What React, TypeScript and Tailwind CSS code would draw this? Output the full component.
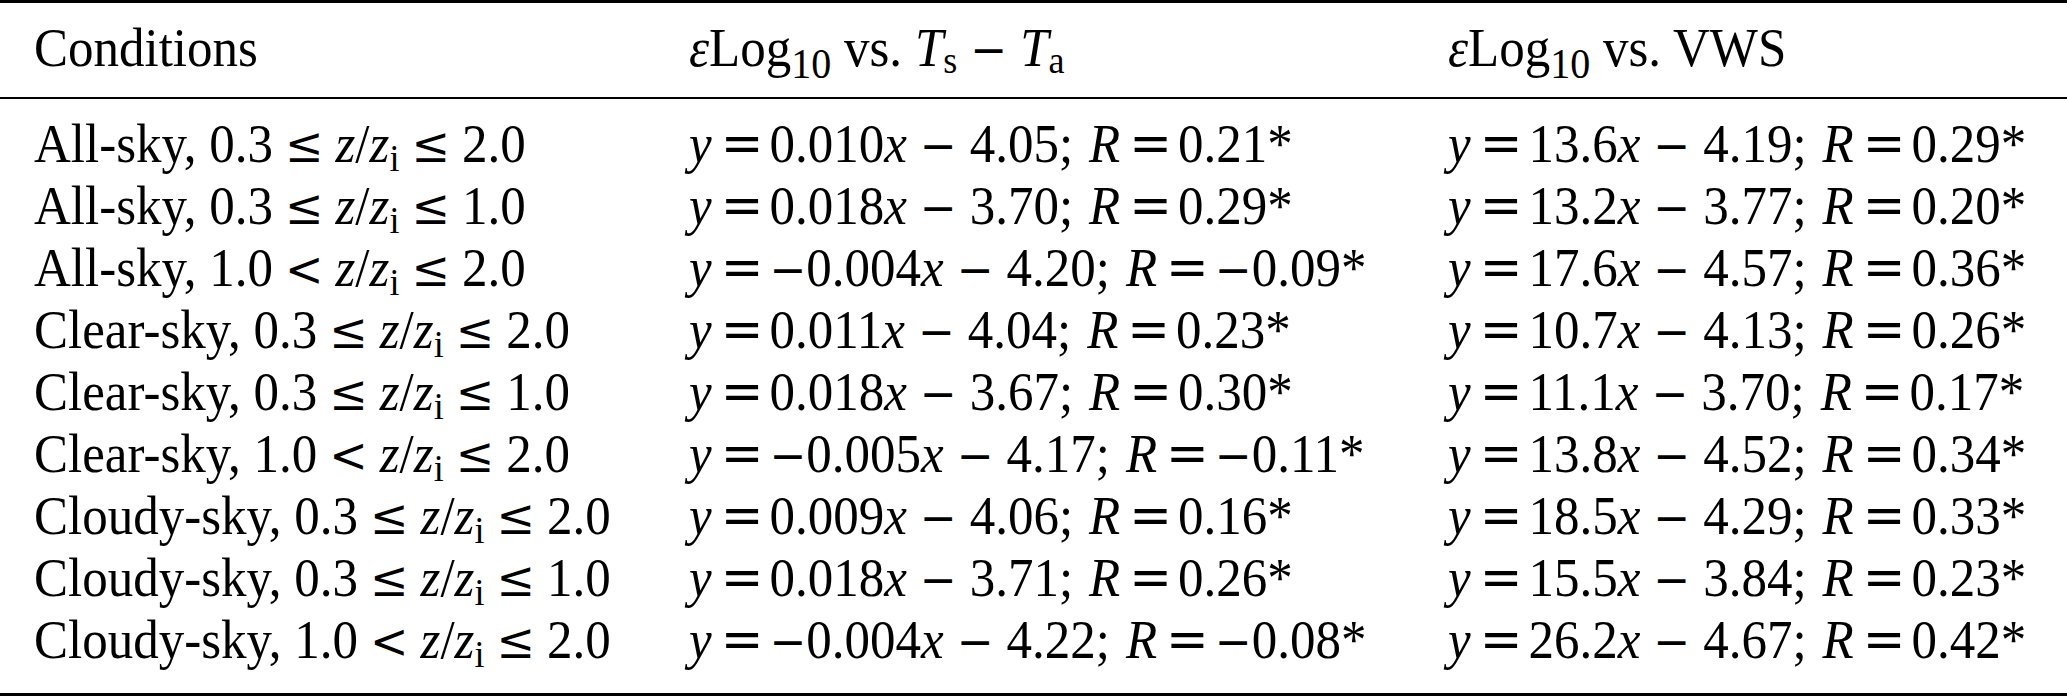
const rows = [
  { sky: "All-sky", lo: "0.3", op: "≤", hi: "2.0", a: ["0.010", "4.05", "0.21"], b: ["13.6", "4.19", "0.29"] },
  { sky: "All-sky", lo: "0.3", op: "≤", hi: "1.0", a: ["0.018", "3.70", "0.29"], b: ["13.2", "3.77", "0.20"] },
  { sky: "All-sky", lo: "1.0", op: "<", hi: "2.0", a: ["-0.004", "4.20", "-0.09"], b: ["17.6", "4.57", "0.36"] },
  { sky: "Clear-sky", lo: "0.3", op: "≤", hi: "2.0", a: ["0.011", "4.04", "0.23"], b: ["10.7", "4.13", "0.26"] },
  { sky: "Clear-sky", lo: "0.3", op: "≤", hi: "1.0", a: ["0.018", "3.67", "0.30"], b: ["11.1", "3.70", "0.17"] },
  { sky: "Clear-sky", lo: "1.0", op: "<", hi: "2.0", a: ["-0.005", "4.17", "-0.11"], b: ["13.8", "4.52", "0.34"] },
  { sky: "Cloudy-sky", lo: "0.3", op: "≤", hi: "2.0", a: ["0.009", "4.06", "0.16"], b: ["18.5", "4.29", "0.33"] },
  { sky: "Cloudy-sky", lo: "0.3", op: "≤", hi: "1.0", a: ["0.018", "3.71", "0.26"], b: ["15.5", "3.84", "0.23"] },
  { sky: "Cloudy-sky", lo: "1.0", op: "<", hi: "2.0", a: ["-0.004", "4.22", "-0.08"], b: ["26.2", "4.67", "0.42"] },
]

// math symbols come out wider in DejaVu, closer to the TeX glyphs
function Eqs() {
  return <span className="ml-[9px] mr-[6px] font-['DejaVu_Serif',serif] text-[51px] leading-none">=</span>
}

function Minus({ binary = false }: { binary?: boolean }) {
  return (
    <span className={`${binary ? "mx-[13px]" : ""} font-['DejaVu_Serif',serif] text-[44px] leading-none`}>−</span>
  )
}

function Num({ v }: { v: string }) {
  return v.startsWith("-") ? (
    <>
      <Minus />
      {v.slice(1)}
    </>
  ) : (
    <>{v}</>
  )
}

function Leq({ op }: { op: string }) {
  return <span className="mx-[12px] font-['DejaVu_Serif',serif] text-[46px] leading-none">{op}</span>
}

function Sub({ children, drop = "top-[8px]" }: { children: React.ReactNode; drop?: string }) {
  return <span className={`relative ${drop} text-[36px] leading-none`}>{children}</span>
}

function Eq({ v }: { v: string[] }) {
  return (
    <>
      <i>y</i>
      <Eqs />
      <Num v={v[0]} />
      <i>x</i>
      <Minus binary />
      {v[1]};<span className="ml-[16px]" />
      <i>R</i>
      <Eqs />
      <Num v={v[2]} />*
    </>
  )
}

function LogHead() {
  return (
    <>
      <i>ε</i>Log
      <span className="relative top-[11px] text-[40px] leading-none">10</span> vs.{" "}
    </>
  )
}

const cell = "scale-y-107"

export default function App() {
  return (
    <div className="w-[2067px] h-[696px] bg-white text-black font-['Liberation_Serif',serif] text-[51px] leading-[62px] whitespace-nowrap">
      {/* header */}
      <div className="grid grid-cols-[655px_759px_1fr] pl-[34px] pt-[14px] pb-[18px] border-t-[3px] border-b-2 border-black">
        <div className={cell}>Conditions</div>
        <div className={cell}>
          <LogHead />
          <i>T</i>
          <Sub drop="top-[6px]">s</Sub>
          <Minus binary />
          <i>T</i>
          <Sub drop="top-[6px]">a</Sub>
        </div>
        <div className={cell}>
          <LogHead />
          VWS
        </div>
      </div>

      {/* body */}
      <div className="grid grid-cols-[655px_759px_1fr] pl-[34px] pt-[14px] pb-[22px] border-b-[3px] border-black">
        {rows.map((r, i) => (
          <div key={i} className="contents">
            <div className={cell}>
              {r.sky}, {r.lo}
              <Leq op={r.op} />
              <i>z</i>/<i>z</i>
              <Sub>i</Sub>
              <Leq op="≤" />
              {r.hi}
            </div>
            <div className={cell}>
              <Eq v={r.a} />
            </div>
            <div className={cell}>
              <Eq v={r.b} />
            </div>
          </div>
        ))}
      </div>
    </div>
  )
}
